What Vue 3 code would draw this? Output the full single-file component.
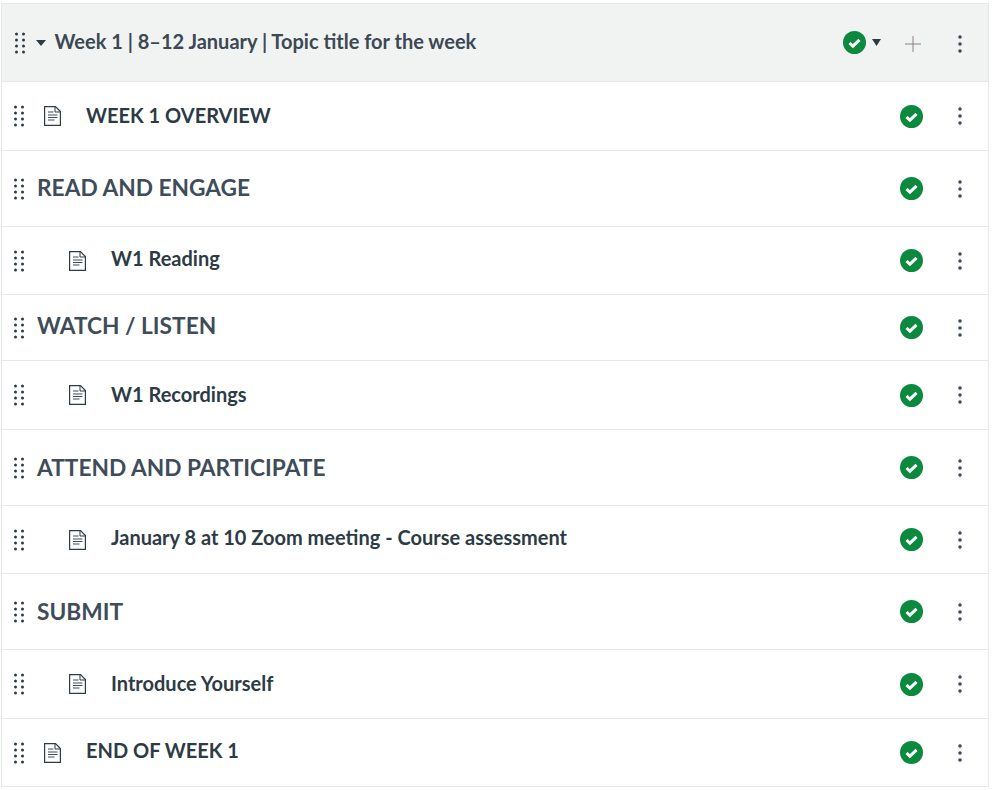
<script setup>
const rows = [
  { title: 'WEEK 1 OVERVIEW', type: 'page', h: 69, lift: 2 },
  { title: 'READ AND ENGAGE', type: 'heading', h: 76, lift: 2 },
  { title: 'W1 Reading', type: 'sub', h: 68, lift: 5 },
  { title: 'WATCH / LISTEN', type: 'heading', h: 66, lift: 4 },
  { title: 'W1 Recordings', type: 'sub', h: 69, lift: 2 },
  { title: 'ATTEND AND PARTICIPATE', type: 'heading', h: 76, lift: 0 },
  { title: 'January 8 at 10 Zoom meeting - Course assessment', type: 'sub', h: 68, lift: 5 },
  { title: 'SUBMIT', type: 'heading', h: 76, lift: 0 },
  { title: 'Introduce Yourself', type: 'sub', h: 69, lift: 2 },
  { title: 'END OF WEEK 1', type: 'page', h: 69, lift: 5 },
]
const dots = [2, 8, 14, 20]
</script>

<template>
  <div class="page">
    <section class="module">
      <header class="head">
        <svg class="grip" width="10" height="22" viewBox="0 0 10 22">
          <template v-for="y in dots" :key="y">
            <circle cx="1.5" :cy="y" r="1.5" />
            <circle cx="8.5" :cy="y" r="1.5" />
          </template>
        </svg>
        <svg class="caret" width="10" height="6" viewBox="0 0 10 6"><path d="M0 0h10L5 6z" /></svg>
        <span class="head-title">Week 1 | 8–12 January | Topic title for the week</span>
        <svg class="check" width="23" height="23" viewBox="0 0 23 23">
          <circle cx="11.5" cy="11.5" r="11.5" fill="#0a893f" />
          <path d="M6.5 12l3.4 3.1 6.6-6.2" fill="none" stroke="#fff" stroke-width="3" />
        </svg>
        <svg class="caret2" width="9" height="7" viewBox="0 0 10 7" preserveAspectRatio="none"><path d="M0 0h10L5 7z" /></svg>
        <svg class="plus" width="16" height="16" viewBox="0 0 16 16">
          <path d="M0 8h16M8 0v16" stroke="#8a8285" stroke-width="1" fill="none" />
        </svg>
        <svg class="kebab head-kebab" width="4" height="18" viewBox="0 0 4 18">
          <circle cx="2" cy="2" r="1.8" /><circle cx="2" cy="9" r="1.8" /><circle cx="2" cy="16" r="1.8" />
        </svg>
      </header>

      <div v-for="row in rows" :key="row.title" class="row" :style="{ height: row.h + 'px' }">
        <svg class="grip" width="10" height="22" viewBox="0 0 10 22">
          <template v-for="y in dots" :key="y">
            <circle cx="1.5" :cy="y" r="1.5" />
            <circle cx="8.5" :cy="y" r="1.5" />
          </template>
        </svg>
        <span v-if="row.type === 'sub'" class="indent"></span>
        <svg v-if="row.type !== 'heading'" class="doc" width="17" height="20" viewBox="0 0 17 20">
          <path d="M.6 .6h10.9l4.9 5v13.8H.6z" fill="#fff" stroke="#2d3b45" stroke-width="1.2" />
          <path d="M11 .6v5.4h5.4" fill="none" stroke="#2d3b45" stroke-width="1" />
          <path d="M4 6h5.5M4 9h9.5M4 11.5h9.5M4 14h6.5" stroke="#3d4a57" stroke-width="1.1" fill="none" />
        </svg>
        <span :class="row.type === 'heading' ? 'heading' : 'item'" :style="{ paddingBottom: row.lift + 'px' }">{{ row.title }}</span>
        <svg class="check" width="23" height="23" viewBox="0 0 23 23">
          <circle cx="11.5" cy="11.5" r="11.5" fill="#0a893f" />
          <path d="M6.5 12l3.4 3.1 6.6-6.2" fill="none" stroke="#fff" stroke-width="3" />
        </svg>
        <svg class="kebab row-kebab" width="4" height="18" viewBox="0 0 4 18">
          <circle cx="2" cy="2" r="1.8" /><circle cx="2" cy="9" r="1.8" /><circle cx="2" cy="16" r="1.8" />
        </svg>
      </div>
    </section>
  </div>
</template>

<style>
html, body { margin: 0; background: #fff; }
</style>

<style scoped>
.page {
  width: 992px;
  height: 790px;
  padding: 3px 0 0 1px;
  box-sizing: border-box;
  font-family: Lato, sans-serif;
  overflow: hidden;
}
.module {
  width: 988px;
  box-sizing: border-box;
  border: 1px solid #e6e8ea;
  border-bottom: 0;
}
.head {
  height: 77px;
  box-sizing: border-box;
  background: #f1f3f3;
  display: flex;
  align-items: center;
  padding-left: 13px;
  padding-right: 26px;
}
.grip { fill: #2d3b45; flex: none; }
.caret { fill: #2d3b45; margin-left: 11px; flex: none; }
.head-title {
  margin-left: 8.5px;
  padding-bottom: 3px;
  flex: 1;
  font-size: 20px;
  font-weight: 700;
  color: #3c4853;
  white-space: nowrap;
}
.caret2 { fill: #2d3b45; margin-left: 6px; flex: none; }
.plus { margin-left: 24px; margin-top: 3px; flex: none; }
.kebab { fill: #3d4a57; flex: none; }
.head-kebab { margin-left: 37px; margin-top: 3px; }
.row {
  display: flex;
  align-items: center;
  box-sizing: border-box;
  border-top: 1px solid #e6e8ea;
  padding-left: 12px;
  padding-right: 26px;
}
.row:last-child { border-bottom: 1px solid #e6e8ea; }
.indent { width: 25px; flex: none; }
.doc { margin-left: 20px; flex: none; }
.item {
  margin-left: 25px;
  flex: 1;
  font-size: 20px;
  font-weight: 700;
  color: #2d3b45;
  white-space: nowrap;
}
.heading {
  margin-left: 13px;
  flex: 1;
  font-size: 22.7px;
  font-weight: 700;
  color: #3f4c59;
  white-space: nowrap;
}
.row-kebab { margin-left: 35px; }
</style>
